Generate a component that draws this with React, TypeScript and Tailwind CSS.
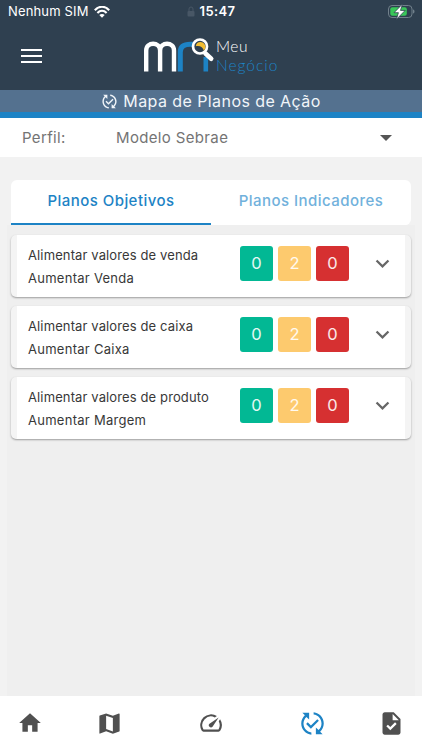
import { MdHome, MdMap, MdSpeed, MdPublishedWithChanges, MdTask, MdKeyboardArrowDown } from 'react-icons/md';

interface Plan {
  title: string;
  subtitle: string;
  done: number;
  pending: number;
  late: number;
}

const plans: Plan[] = [
  { title: 'Alimentar valores de venda', subtitle: 'Aumentar Venda', done: 0, pending: 2, late: 0 },
  { title: 'Alimentar valores de caixa', subtitle: 'Aumentar Caixa', done: 0, pending: 2, late: 0 },
  { title: 'Alimentar valores de produto', subtitle: 'Aumentar Margem', done: 0, pending: 2, late: 0 },
];

function StatusBar() {
  return (
    <div className="grid h-[23px] grid-cols-3 items-center px-2 text-[13px] text-white">
      <div className="flex items-center gap-[5px]">
        <span className="whitespace-nowrap tracking-[0.15px]">Nenhum SIM</span>
        <svg className="h-3 w-4" viewBox="0 0 16 12" fill="none" stroke="currentColor" strokeWidth="2.1">
          <path d="M.8 4.2C5-.4 11-.4 15.2 4.2" />
          <path d="M3.4 6.9c2.7-2.8 6.5-2.8 9.2 0" />
          <path d="M8 11.8 5.3 9c1.5-1.5 3.9-1.5 5.4 0z" fill="currentColor" stroke="none" />
        </svg>
      </div>
      <div className="flex items-center justify-center gap-[5px]">
        <svg className="h-[11px] w-2" viewBox="0 0 8 11" fill="none">
          <path d="M2 5V3a2 2 0 0 1 4 0v2" stroke="#485766" />
          <rect x="0.5" y="5" width="7" height="5.5" rx="1" fill="#485766" />
        </svg>
        <span className="font-semibold tracking-[0.4px]">15:47</span>
      </div>
      <svg className="mr-[-1px] h-4 w-7 justify-self-end" viewBox="0 0 28 16">
        <rect x="1.5" y="1.5" width="23.5" height="12" rx="3.5" fill="none" stroke="#71808b" />
        <rect x="3.3" y="3.3" width="16.5" height="8.4" rx="2" fill="#38c759" />
        <path d="M26 5.5c2 .5 2 3.5 0 4z" fill="#71808b" />
        <path d="M15.5 0 7 8.7h4.4L9.4 15.4l8.8-9h-4.7z" fill="#fff" stroke="#2f4050" strokeWidth="0.8" />
      </svg>
    </div>
  );
}

function Logo() {
  return (
    <div className="flex h-10 items-center">
      <svg className="h-10 w-[72px]" viewBox="0 0 72 40" fill="none" strokeWidth="4.4">
        <path d="M3.2 35.5V14.5c0-9 13.9-9 13.9 0v21M17.1 14.5c0-9 13.9-9 13.9 0v21" stroke="#fff" />
        <path d="M37.3 35.5V16c0-5.5 4-7.8 10-7.8h5" stroke="#1d83c5" strokeWidth="5" />
        <path d="M62.8 21v14.5" stroke="#1d83c5" strokeWidth="4.6" />
        <path d="m62.5 17.5 5.7 5.2" stroke="#fff" strokeWidth="4.6" strokeLinecap="round" />
        <circle cx="57" cy="10.5" r="7" fill="#2f4050" stroke="#fff" strokeWidth="2.7" />
        <path d="M52.8 10.2c.2-4.3 6-5.8 8.8-2 1.5 2 1 4.8-.8 6.3-.8-3.2-3.7-5.2-8-4.3z" fill="#f3bd32" />
      </svg>
      <div className="flex flex-col pl-px font-[Lato,sans-serif] text-[15.5px] leading-[19px]">
        <span className="font-light tracking-[0.5px] text-white">Meu</span>
        <span className="font-light tracking-[1px] text-[#1d83c5]">Negócio</span>
      </div>
    </div>
  );
}

function PlanCard({ plan }: { plan: Plan }) {
  return (
    <div className="h-[62px] overflow-hidden rounded-[5px] bg-[#f4f4f4] px-1.5 shadow-[0_1px_2px_rgba(0,0,0,0.35)]">
      <div className="flex h-full items-center bg-white pl-[11px]">
        <div className="w-[212px] pt-px text-[13px] leading-[22.5px] text-[#383838]">
          <p className="whitespace-nowrap tracking-[0.12px]">{plan.title}</p>
          <p className="whitespace-nowrap tracking-[0.27px]">{plan.subtitle}</p>
        </div>
        <div className="mb-[5px] flex gap-[5px] text-[16.5px] text-white/90">
          <span className="flex h-[35px] w-[33px] items-center justify-center rounded-[3px] bg-[#02b894]">{plan.done}</span>
          <span className="flex h-[35px] w-[33px] items-center justify-center rounded-[3px] bg-[#fdca6e]">{plan.pending}</span>
          <span className="flex h-[35px] w-[33px] items-center justify-center rounded-[3px] bg-[#d63031]">{plan.late}</span>
        </div>
        <MdKeyboardArrowDown className="mb-[5px] ml-5 size-[27px] text-[#666]" />
      </div>
    </div>
  );
}

function BottomNav() {
  return (
    <nav className="flex h-[54px] items-center bg-white pl-[17px] text-[#505050]">
      <MdHome className="size-[26px]" />
      <MdMap className="ml-[53px] size-[27px]" />
      <MdSpeed className="ml-[75px] size-[26px]" />
      <MdPublishedWithChanges className="ml-[75px] size-[27px] text-[#1d83c5]" />
      <MdTask className="ml-[52px] size-[27px]" />
    </nav>
  );
}

export default function App() {
  return (
    <div className="flex h-[750px] w-[422px] flex-col bg-[#f2f2f2] font-[Inter,sans-serif]">
      <header className="h-[90px] bg-[#2f4050]">
        <StatusBar />
        <div className="flex items-center pl-[21px] pt-[13px]">
          <button className="flex w-[21px] flex-col gap-[3.5px]" aria-label="Menu">
            <span className="h-[2.5px] w-full bg-white" />
            <span className="h-[2.5px] w-full bg-white" />
            <span className="h-[2.5px] w-full bg-white" />
          </button>
          <div className="ml-[101px]">
            <Logo />
          </div>
        </div>
      </header>

      <div className="flex h-7 items-center justify-center gap-[5px] border-b-[6px] border-[#1d83c5] bg-[#54718f] text-[#f1f5f9]">
        <MdPublishedWithChanges className="size-[17px]" />
        <h1 className="text-[16px] tracking-[0.42px]">Mapa de Planos de Ação</h1>
      </div>

      <div className="flex h-[39px] items-center bg-white pl-[22px] pr-[30px] pt-px text-[15px] tracking-[0.35px] text-[#747474]">
        <span className="w-[94px]">Perfil:</span>
        <span className="flex-1">Modelo Sebrae</span>
        <svg className="h-[6px] w-[12px]" viewBox="0 0 12 6">
          <path d="M0 0h12L6 6z" fill="#555" />
        </svg>
      </div>

      <main className="flex flex-1 flex-col px-[7px] pt-[23px]">
        <div className="mx-1 flex h-[45px] overflow-hidden rounded-t-md rounded-br-md bg-white text-[15px] font-medium tracking-[0.45px]">
          <div className="flex flex-1 items-center justify-center border-b-2 border-[#1d83c5] text-[#1d83c5]">Planos Objetivos</div>
          <div className="flex flex-1 items-center justify-center border-b-2 border-white text-[#71b1dc]">Planos Indicadores</div>
        </div>
        <div className="flex flex-1 flex-col gap-[9px] bg-[#efefef] px-1 pt-[10px]">
          {plans.map((plan) => (
            <PlanCard key={plan.title} plan={plan} />
          ))}
        </div>
      </main>

      <BottomNav />
    </div>
  );
}
